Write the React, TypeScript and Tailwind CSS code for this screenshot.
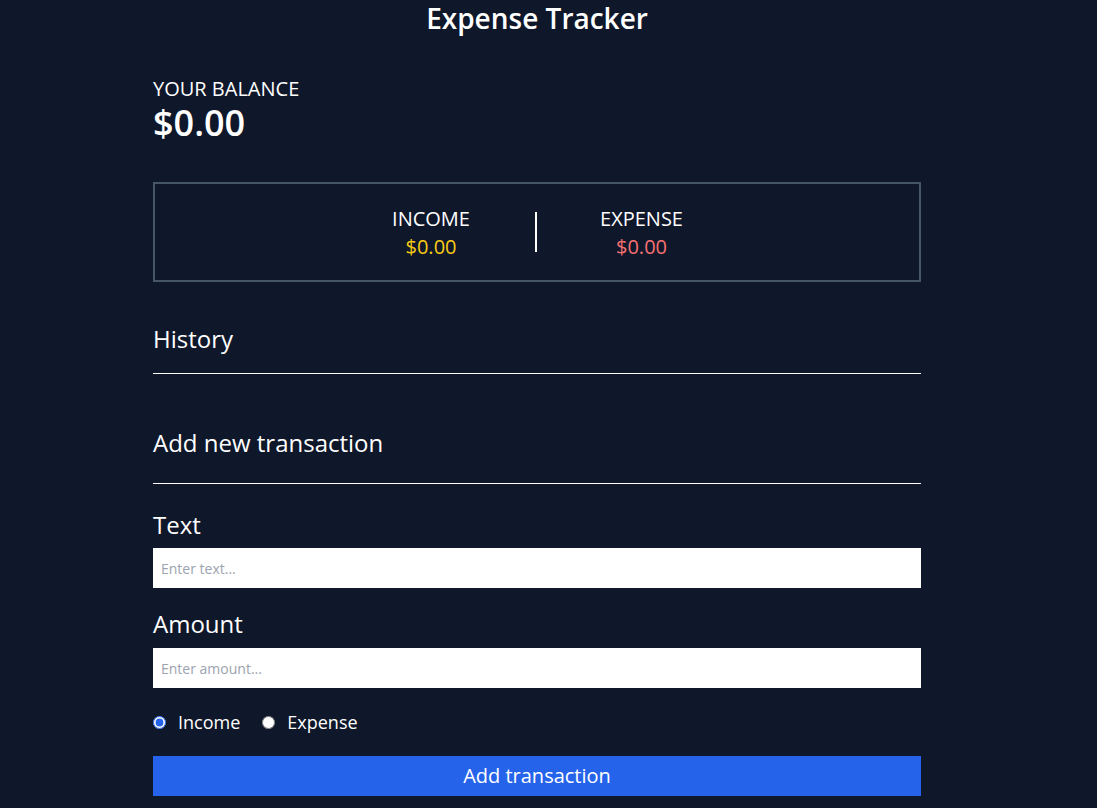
import { useState } from 'react'

export default function App() {
  const [type, setType] = useState<'income' | 'expense'>('income')

  return (
    <div className="min-h-screen bg-[#0f172a] pr-[23px] text-white font-['Open_Sans',sans-serif]">
      <div className="mx-auto max-w-3xl pb-10">
        <h1 className="text-center text-[28px] leading-9 font-semibold">Expense Tracker</h1>

        {/* Balance */}
        <div className="mt-[39px]">
          <h4 className="text-xl uppercase">Your Balance</h4>
          <h2 className="text-4xl font-semibold">$0.00</h2>
        </div>

        {/* Income / Expense */}
        <div className="mt-[39px] flex h-[100px] items-center justify-center border-2 border-[#475569]">
          <div className="w-[207px] pt-0.5 text-center">
            <h4 className="text-xl uppercase">Income</h4>
            <p className="text-xl text-[#facc15]">$0.00</p>
          </div>
          <div className="h-10 w-0.5 bg-white" />
          <div className="w-[210px] pt-0.5 text-center">
            <h4 className="text-xl uppercase">Expense</h4>
            <p className="text-xl text-[#f87171]">$0.00</p>
          </div>
        </div>

        {/* History */}
        <h3 className="mt-[41px] border-b border-white pb-[18px] text-2xl">History</h3>
        <ul />

        {/* Add transaction */}
        <h3 className="mt-[53px] border-b border-white pb-[24px] text-2xl">Add new transaction</h3>
        <form className="mt-[25px]" onSubmit={(e) => e.preventDefault()}>
          <label className="block text-2xl" htmlFor="text">
            Text
          </label>
          <input
            id="text"
            type="text"
            placeholder="Enter text..."
            className="mt-[7px] block h-10 w-full bg-white px-2 text-sm text-gray-900 placeholder:text-[#9ca3af] outline-none"
          />
          <label className="mt-5 block text-2xl" htmlFor="amount">
            Amount
          </label>
          <input
            id="amount"
            type="number"
            placeholder="Enter amount..."
            className="mt-2 block h-10 w-full bg-white px-2 text-sm text-gray-900 placeholder:text-[#9ca3af] outline-none"
          />
          <div className="mt-5 flex h-7 items-center text-lg">
            <label className="flex items-center">
              <input
                type="radio"
                name="type"
                checked={type === 'income'}
                onChange={() => setType('income')}
                className="m-0 h-[13px] w-[13px] accent-[#2563eb]"
              />
              <span className="ml-3">Income</span>
            </label>
            <label className="ml-[22px] flex items-center">
              <input
                type="radio"
                name="type"
                checked={type === 'expense'}
                onChange={() => setType('expense')}
                className="m-0 h-[13px] w-[13px] accent-[#2563eb]"
              />
              <span className="ml-3">Expense</span>
            </label>
          </div>
          <button type="submit" className="mt-5 block h-10 w-full bg-[#2563eb] text-xl text-white">
            Add transaction
          </button>
        </form>
      </div>
    </div>
  )
}
